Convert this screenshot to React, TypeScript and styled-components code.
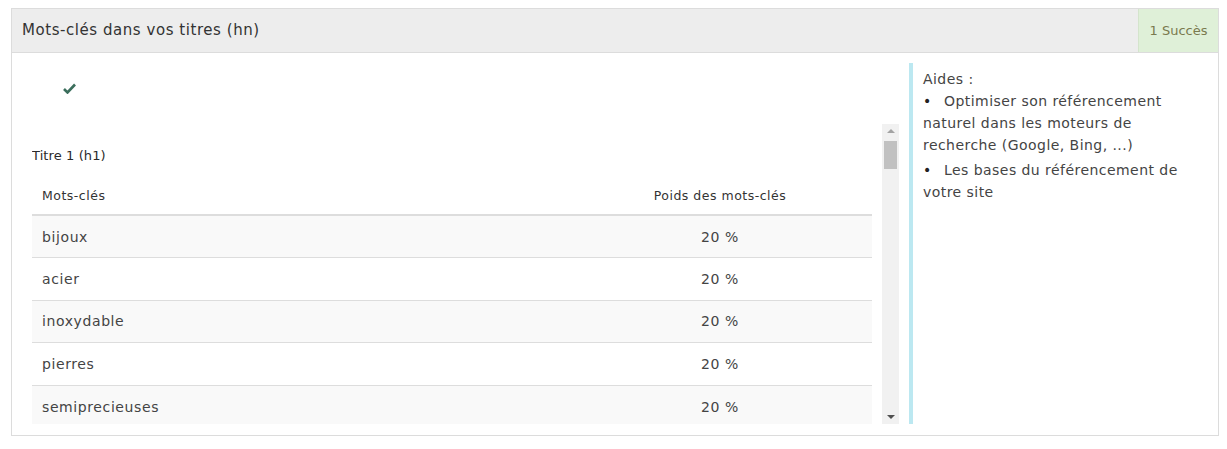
import React from "react";
import styled, { createGlobalStyle } from "styled-components";

const Global = createGlobalStyle`
  html, body { margin: 0; padding: 0; background: #fff; }
  body { font-family: "DejaVu Sans", "Open Sans", sans-serif; color: #333; }
  * { box-sizing: border-box; }
`;

const Page = styled.div`
  padding: 8px 8px 0 11px;
  width: 1227px;
`;

const Panel = styled.section`
  width: 1208px;
  height: 428px;
  border: 1px solid #dcdcdc;
  display: flex;
  flex-direction: column;
`;

const Header = styled.header`
  height: 44px;
  background: #ededed;
  border-bottom: 1px solid #dcdcdc;
  display: flex;
  align-items: stretch;
  justify-content: space-between;
`;

const Title = styled.h3`
  margin: 0;
  padding: 0 0 1px 10px;
  font-size: 15px;
  letter-spacing: 0.55px;
  font-weight: 400;
  color: #333;
  display: flex;
  align-items: center;
`;

const Badge = styled.div`
  width: 80px;
  background: #dff0d8;
  border-left: 1px solid #d4e4cc;
  color: #7a7a4e;
  font-size: 13px;
  display: flex;
  align-items: center;
  justify-content: center;
`;

const Body = styled.div`
  flex: 1;
  display: flex;
  padding: 10px 0 11px 20px;
  min-height: 0;
`;

const Main = styled.div`
  width: 867px;
  display: flex;
  flex-direction: column;
`;

const CheckRow = styled.div`
  height: 61px;
  padding: 16px 0 0 31px;
  color: #3b6e5c;
`;

const ScrollArea = styled.div`
  flex: 1;
  display: flex;
  gap: 10px;
  min-height: 0;
`;

const ScrollContent = styled.div`
  flex: 1;
  overflow: hidden;
  padding-top: 22px;
`;

const SectionTitle = styled.h4`
  margin: 0 0 11px;
  font-size: 13px;
  letter-spacing: 0.1px;
  font-weight: 500;
  color: #2a2a2a;
  line-height: 20px;
`;

const Table = styled.table`
  width: 100%;
  border-collapse: collapse;
  font-size: 14px;
`;

const Th = styled.th<{ $center?: boolean; $w?: string }>`
  text-align: ${(p) => (p.$center ? "center" : "left")};
  width: ${(p) => p.$w || "auto"};
  font-size: 12.5px;
  letter-spacing: 0.5px;
  font-weight: 500;
  color: #333;
  padding: 0 10px;
  height: 38px;
  border-bottom: 2px solid #dddddd;
`;

const Tr = styled.tr<{ $striped?: boolean }>`
  background: ${(p) => (p.$striped ? "#f9f9f9" : "#fff")};
`;

const Td = styled.td<{ $center?: boolean }>`
  text-align: ${(p) => (p.$center ? "center" : "left")};
  padding: 0 10px;
  height: 42.5px;
  letter-spacing: 0.6px;
  border-top: 1px solid #dddddd;
  color: #444;
`;

const ScrollBar = styled.div`
  width: 17px;
  background: #f1f1f1;
  display: flex;
  flex-direction: column;
  align-items: center;
  justify-content: space-between;
  padding: 5px 0;
  position: relative;
`;

const Thumb = styled.div`
  position: absolute;
  top: 17px;
  left: 2px;
  width: 13px;
  height: 28px;
  background: #c1c1c1;
`;

const Arrow = styled.div<{ $down?: boolean }>`
  width: 0;
  height: 0;
  border-left: 4px solid transparent;
  border-right: 4px solid transparent;
  ${(p) =>
    p.$down
      ? "border-top: 4px solid #505050;"
      : "border-bottom: 4px solid #a3a3a3;"}
`;

const Aside = styled.aside`
  margin-left: 10px;
  width: 306px;
  border-left: 4px solid #bce8f1;
  padding: 5px 12px 0 10px;
  font-size: 14px;
  letter-spacing: 0.45px;
  line-height: 22px;
  color: #444;
`;

const HelpList = styled.ul`
  list-style: none;
  margin: 0;
  padding: 0;
`;

const HelpItem = styled.li`
  margin-bottom: 3px;
  &::before {
    content: "•";
    display: inline-block;
    width: 21px;
    color: #222;
  }
`;

const rows = ["bijoux", "acier", "inoxydable", "pierres", "semiprecieuses"];

export default function App() {
  return (
    <Page>
      <Global />
      <Panel>
        <Header>
          <Title>Mots-clés dans vos titres (hn)</Title>
          <Badge>1 Succès</Badge>
        </Header>
        <Body>
          <Main>
            <CheckRow>
              <svg width="13" height="11" viewBox="0 0 13 11">
                <path
                  d="M1 6 L4.5 9.5 L12 1.5"
                  fill="none"
                  stroke="currentColor"
                  strokeWidth="2.6"
                />
              </svg>
            </CheckRow>
            <ScrollArea>
              <ScrollContent>
                <SectionTitle>Titre 1 (h1)</SectionTitle>
                <Table>
                  <thead>
                    <tr>
                      <Th>Mots-clés</Th>
                      <Th $center $w="304px">
                        Poids des mots-clés
                      </Th>
                    </tr>
                  </thead>
                  <tbody>
                    {rows.map((r, i) => (
                      <Tr key={r} $striped={i % 2 === 0}>
                        <Td>{r}</Td>
                        <Td $center>20 %</Td>
                      </Tr>
                    ))}
                  </tbody>
                </Table>
              </ScrollContent>
              <ScrollBar>
                <Arrow />
                <Thumb />
                <Arrow $down />
              </ScrollBar>
            </ScrollArea>
          </Main>
          <Aside>
            Aides :
            <HelpList>
              <HelpItem>Optimiser son référencement naturel dans les moteurs de recherche (Google, Bing, ...)</HelpItem>
              <HelpItem>Les bases du référencement de votre site</HelpItem>
            </HelpList>
          </Aside>
        </Body>
      </Panel>
    </Page>
  );
}
